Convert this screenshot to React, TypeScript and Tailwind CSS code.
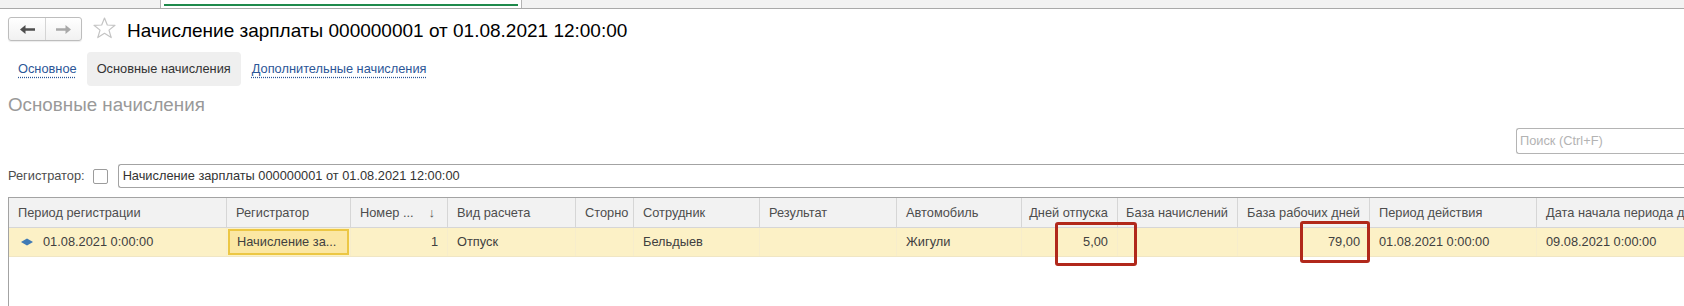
import React from "react";

type Col = {
  w: string;
  head: string;
  value?: string;
  right?: boolean;
};

const columns: Col[] = [
  { w: "w-[218px]", head: "Период регистрации" },
  { w: "w-[124px]", head: "Регистратор" },
  { w: "w-[97px]", head: "Номер ...", value: "1", right: true },
  { w: "w-[128px]", head: "Вид расчета", value: "Отпуск" },
  { w: "w-[58px]", head: "Сторно" },
  { w: "w-[126px]", head: "Сотрудник", value: "Бельдыев" },
  { w: "w-[137px]", head: "Результат" },
  { w: "w-[125px]", head: "Автомобиль", value: "Жигули" },
  { w: "w-[96px]", head: "Дней отпуска", value: "5,00", right: true },
  { w: "w-[120px]", head: "База начислений", right: true },
  { w: "w-[132px]", head: "База рабочих дней", value: "79,00", right: true },
  { w: "w-[167px]", head: "Период действия", value: "01.08.2021 0:00:00" },
  { w: "w-[320px]", head: "Дата начала периода действия", value: "09.08.2021 0:00:00" },
];

function Star() {
  return (
    <svg width="25" height="22" viewBox="0 0 25 22">
      <polygon
        points="12.5,1 15.3,8 23,8.3 17,13.1 19.2,20.6 12.5,16.3 5.8,20.6 8,13.1 2,8.3 9.7,8"
        fill="none"
        stroke="#c4c4c4"
        strokeWidth="1.2"
        strokeLinejoin="round"
      />
    </svg>
  );
}

function Arrow({ dir, color }: { dir: "left" | "right"; color: string }) {
  return (
    <svg width="15" height="9" viewBox="0 0 15 9" className={dir === "right" ? "rotate-180" : ""}>
      <polygon points="0,4.5 5.5,0 5.5,3.3 15,3.3 15,5.7 5.5,5.7 5.5,9" fill={color} />
    </svg>
  );
}

function Diamond() {
  return (
    <svg width="12" height="8" viewBox="0 0 12 8">
      <polygon points="0,4 6,0.5 12,4 6,7.5" fill="#3f7ab5" />
    </svg>
  );
}

export default function App() {
  return (
    <div className="relative w-[1684px] h-[306px] overflow-hidden bg-white font-['Liberation_Sans',Arial,sans-serif] text-[12.8px] text-[#404040]">
      {/* top strip with open tab */}
      <div className="flex h-[9px] bg-[#f2f2f2] border-b border-[#a9a9a9]">
        <div className="ml-[160px] w-[362px] h-full bg-white border-x border-[#b4b4b4] px-[3px] pt-[4px]">
          <div className="h-[2px] bg-[#1f8a4c]" />
        </div>
      </div>

      {/* title row */}
      <div className="flex items-center mt-[8px] pl-[8px] h-[24px]">
        <div className="flex h-[24px] w-[74px] rounded-[3px] border border-[#bdbdbd] bg-gradient-to-b from-white to-[#f1f1f1] shadow-[0_1px_1px_rgba(0,0,0,0.08)]">
          <div className="flex w-[37px] items-center justify-center border-r border-[#d4d4d4]">
            <Arrow dir="left" color="#4f4f4f" />
          </div>
          <div className="flex flex-1 items-center justify-center">
            <Arrow dir="right" color="#a8a8a8" />
          </div>
        </div>
        <div className="ml-[10px] mt-[-2px]">
          <Star />
        </div>
        <h1 className="ml-[10px] mt-[2px] text-[19px] leading-none text-black whitespace-nowrap">
          Начисление зарплаты 000000001 от 01.08.2021 12:00:00
        </h1>
      </div>

      {/* section tabs */}
      <div className="flex items-center mt-[11px] h-[34px] pl-[18px]">
        <a className="text-[#2c5697] underline decoration-dotted underline-offset-[3px]">Основное</a>
        <div className="ml-[10px] flex h-full items-center rounded-[4px] bg-[#efefef] px-[10px] text-[#333]">
          Основные начисления
        </div>
        <a className="ml-[11px] text-[#2c5697] underline decoration-dotted underline-offset-[3px]">
          Дополнительные начисления
        </a>
      </div>

      {/* heading */}
      <h2 className="mt-[8px] pl-[8px] text-[18.8px] leading-[22px] text-[#999999]">Основные начисления</h2>

      {/* search */}
      <div className="mt-[12px] flex justify-end">
        <div className="flex h-[26px] w-[168px] items-center rounded-l-[3px] border border-r-0 border-[#b4b4b4] pl-[3px] text-[#b3b3b3]">
          Поиск (Ctrl+F)
        </div>
      </div>

      {/* filter row */}
      <div className="mt-[10px] flex h-[24px] items-center pl-[8px]">
        <span className="text-[#4d4d4d]">Регистратор:</span>
        <span className="ml-[8px] h-[15px] w-[15px] rounded-[2px] border border-[#9c9c9c] bg-white" />
        <div className="ml-[10px] flex h-full flex-1 items-center rounded-l-[3px] border border-r-0 border-[#a3a3a3] pl-[4px] text-[#333]">
          Начисление зарплаты 000000001 от 01.08.2021 12:00:00
        </div>
      </div>

      {/* list */}
      <div className="mt-[9px] ml-[8px] h-[120px] border-l border-t border-[#a3a3a3]">
        <div className="flex h-[30px] bg-[#f2f2f2] border-b border-[#d6d6d6]">
          {columns.map((c, i) => (
            <div
              key={c.head}
              className={`${c.w} shrink-0 flex items-center whitespace-nowrap overflow-hidden border-r border-[#d6d6d6] px-[9px] text-[#4d4d4d] ${
                c.right ? "justify-end" : ""
              }`}
            >
              {i === 2 ? (
                <div className="flex w-full items-center justify-between pr-[3px]">
                  <span>{c.head}</span>
                  <span className="text-[13px] text-[#555]">↓</span>
                </div>
              ) : (
                c.head
              )}
            </div>
          ))}
        </div>

        <div className="flex h-[29px] bg-[#fcf1c6] border-b border-[#f0e6c4]">
          {columns.map((c, i) => (
            <div
              key={c.head}
              className={`${c.w} shrink-0 flex items-center whitespace-nowrap overflow-hidden border-r border-[#f7edcb] ${
                c.right ? "justify-end" : ""
              } ${i === 1 ? "px-[1px] py-[1px]" : "px-[9px]"}`}
            >
              {i === 0 && (
                <div className="flex items-center gap-[10px] pl-[3px]">
                  <Diamond />
                  <span>01.08.2021 0:00:00</span>
                </div>
              )}
              {i === 1 && (
                <div className="flex h-full w-full items-center border-2 border-[#ecc744] bg-[#fbe7a3] pl-[7px]">
                  Начисление за...
                </div>
              )}
              {i > 1 && c.value}
            </div>
          ))}
        </div>
      </div>

      {/* highlighted values */}
      <div className="absolute left-[1055px] top-[222px] h-[44px] w-[82px] rounded-[3px] border-[3px] border-[#b1281b]" />
      <div className="absolute left-[1300px] top-[221px] h-[42px] w-[70px] rounded-[3px] border-[3px] border-[#b1281b]" />
    </div>
  );
}
